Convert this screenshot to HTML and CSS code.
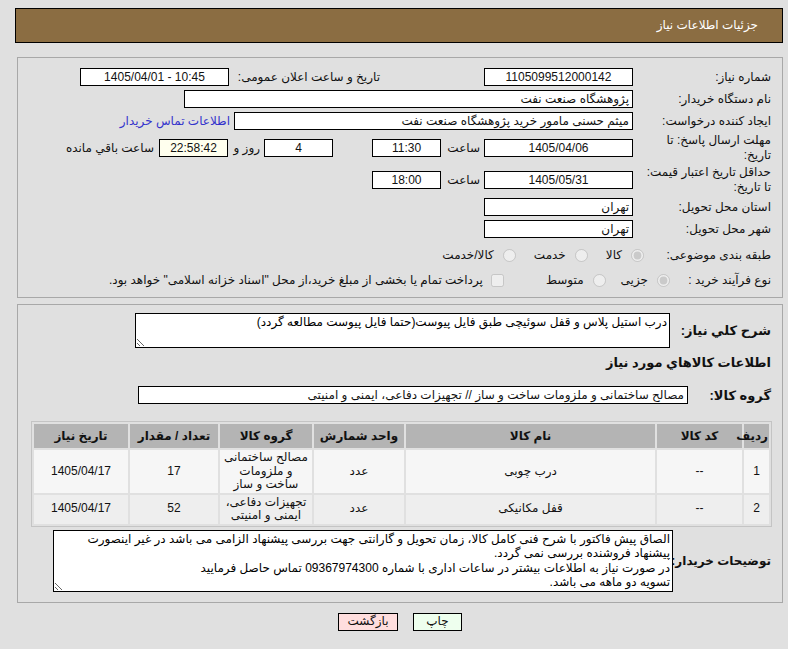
FILE: index.html
```html
<!DOCTYPE html>
<html lang="fa" dir="rtl">
<head>
  <meta charset="UTF-8" />
  <title>جزئیات اطلاعات نیاز</title>
  <link rel="stylesheet" href="styles.css">
</head>
<body>
  <div class="title-bar">جزئیات اطلاعات نیاز</div>

  <div class="panel info">
    <div class="row">
      <span class="lbl">شماره نیاز:</span>
      <span class="cell-first"><span class="box num w149" dir="ltr">1105099512000142</span></span>
      <span class="lbl-inline">تاریخ و ساعت اعلان عمومی:</span>
      <span class="box num w149" dir="ltr">1405/04/01 - 10:45</span>
    </div>
    <div class="row">
      <span class="lbl">نام دستگاه خریدار:</span>
      <span class="box w449">پژوهشگاه صنعت نفت</span>
    </div>
    <div class="row">
      <span class="lbl">ایجاد کننده درخواست:</span>
      <span class="box w399">میثم حسنی مامور خرید پژوهشگاه صنعت نفت</span>
      <a class="contact" href="#">اطلاعات تماس خریدار</a>
    </div>
    <div class="row tall">
      <span class="lbl">مهلت ارسال پاسخ: تا<br>تاریخ:</span>
      <span class="box num w149" dir="ltr">1405/04/06</span>
      <span class="unit">ساعت</span>
      <span class="box num w69" dir="ltr">11:30</span>
      <span class="box num w69 days" dir="ltr">4</span>
      <span class="unit short">روز و</span>
      <span class="box num w69 remain" dir="ltr">22:58:42</span>
      <span class="remain-lbl">ساعت باقي مانده</span>
    </div>
    <div class="row tall">
      <span class="lbl">حداقل تاریخ اعتبار قیمت:<br>تا تاریخ:</span>
      <span class="box num w149" dir="ltr">1405/05/31</span>
      <span class="unit">ساعت</span>
      <span class="box num w69" dir="ltr">18:00</span>
    </div>
    <div class="row">
      <span class="lbl">استان محل تحویل:</span>
      <span class="box w149">تهران</span>
    </div>
    <div class="row">
      <span class="lbl">شهر محل تحویل:</span>
      <span class="box w149">تهران</span>
    </div>
    <div class="row choice cat">
      <span class="lbl">طبقه بندی موضوعی:</span>
      <label class="opt"><input type="radio" name="cat" checked disabled>كالا</label>
      <label class="opt"><input type="radio" name="cat" disabled>خدمت</label>
      <label class="opt"><input type="radio" name="cat" disabled>كالا/خدمت</label>
    </div>
    <div class="row choice proc">
      <span class="lbl">نوع فرآیند خرید :</span>
      <label class="opt"><input type="radio" name="proc" checked disabled>جزیی</label>
      <label class="opt"><input type="radio" name="proc" disabled>متوسط</label>
      <label class="opt treasury"><input type="checkbox" disabled>پرداخت تمام یا بخشی از مبلغ خرید،از محل "اسناد خزانه اسلامی" خواهد بود.</label>
    </div>
  </div>

  <div class="panel details">
    <div class="row desc">
      <span class="lbl-bold">شرح کلي نياز:</span>
      <textarea class="area desc-area" readonly>درب استیل پلاس و قفل سوئیچی طبق فایل پیوست(حتما فایل پیوست مطالعه گردد)</textarea>
    </div>
    <div class="section-title">اطلاعات کالاهاي مورد نياز</div>
    <div class="row group">
      <span class="lbl-bold">گروه کالا:</span>
      <span class="box w550">مصالح ساختمانی و ملزومات ساخت و ساز // تجهیزات دفاعی، ایمنی و امنیتی</span>
    </div>
    <table class="items">
      <thead>
        <tr>
          <th class="c-row">ردیف</th>
          <th class="c-code">کد کالا</th>
          <th class="c-name">نام کالا</th>
          <th class="c-unit">واحد شمارش</th>
          <th class="c-group">گروه کالا</th>
          <th class="c-qty">تعداد / مقدار</th>
          <th class="c-date">تاریخ نیاز</th>
        </tr>
      </thead>
      <tbody>
        <tr class="odd">
          <td>1</td>
          <td>--</td>
          <td>درب چوبی</td>
          <td>عدد</td>
          <td>مصالح ساختمانی و ملزومات ساخت و ساز</td>
          <td>17</td>
          <td>1405/04/17</td>
        </tr>
        <tr class="even">
          <td>2</td>
          <td>--</td>
          <td>قفل مکانیکی</td>
          <td>عدد</td>
          <td>تجهیزات دفاعی، ایمنی و امنیتی</td>
          <td>52</td>
          <td>1405/04/17</td>
        </tr>
      </tbody>
    </table>
    <div class="row notes">
      <span class="lbl-bold">توضیحات خریدار:</span>
      <textarea class="area notes-area" readonly>الصاق پیش فاکتور با شرح فنی کامل کالا، زمان تحویل و گارانتی جهت بررسی پیشنهاد الزامی می باشد در غیر اینصورت پیشنهاد فروشنده بررسی نمی گردد.
در صورت نیاز به اطلاعات بیشتر در ساعات اداری با شماره 09367974300 تماس حاصل فرمایید
تسویه دو ماهه می باشد.</textarea>
    </div>
  </div>

  <div class="actions">
    <button class="btn print">چاپ</button>
    <button class="btn back">بازگشت</button>
  </div>
</body>
</html>
```

FILE: styles.css
```css
* { margin: 0; padding: 0; box-sizing: border-box; }
body { font-family: "Liberation Sans", "DejaVu Sans", sans-serif; font-size: 12px; color: #111; background: #e0e0e0; }

.title-bar { margin: 8px 5px 0 15px; height: 35px; line-height: 33px; padding-right: 24px; background: #8b6d42; border: 1px solid #000; color: #fff; font-size: 12px; }

.panel { margin: 14px 5px 0 17px; border: 1px solid #a8a8a8; padding-right: 11px; }
.info { padding-top: 8px; padding-bottom: 6px; }
.details { margin-top: 6px; padding-top: 8px; padding-bottom: 10px; }

.row { display: flex; align-items: center; height: 22px; }
.row.tall { height: 32px; }
.lbl { width: 138px; flex: none; line-height: 15px; }
.lbl-inline { width: 151px; flex: none; }
.cell-first { width: 253px; flex: none; display: flex; }

.box { display: inline-block; height: 18px; line-height: 16px; border: 1px solid #000; background: #fff; padding: 0 3px; white-space: nowrap; overflow: hidden; flex: none; }
.num { text-align: center; }
.w149 { width: 149px; }
.w69 { width: 69px; }
.w399 { width: 399px; }
.w449 { width: 449px; }
.w550 { width: 550px; }
.remain { background: #ffffee; }
.days { margin-right: 39px; }

.unit { width: 43px; padding-right: 4px; flex: none; }
.unit.short { width: 36px; }
.remain-lbl { margin-right: 5px; }
.contact { color: #3333cc; text-decoration: none; margin-right: 4px; }

.choice { gap: 0; }
.cat { margin-top: 4px; }
.proc { margin-top: 3px; }
.cat .lbl { width: 127px; }
.proc .lbl { width: 101px; }
.opt { display: flex; align-items: center; gap: 9px; margin-left: 18px; }
.opt input { margin: 0; width: 13px; height: 13px; }
.proc .opt { margin-left: 15px; }
.proc .treasury { margin-right: 27px; gap: 8px; }

.lbl-bold { font-weight: bold; font-size: 13px; flex: none; white-space: nowrap; }
.desc { height: auto; align-items: center; }
.desc .lbl-bold { width: 101px; }
.area { display: block; border: 1px solid #000; background: #fff; font-family: inherit; font-size: 12px; line-height: 14.5px; color: #000; padding: 1px 2px; overflow: hidden; }
.desc-area { width: 535px; height: 35px; }
.section-title { font-weight: bold; font-size: 13px; height: 30px; line-height: 30px; }
.group { margin-top: 8px; height: 18px; }
.group .lbl-bold { width: 83px; }

.items { margin: 17px -1px 0 10px; border: 1px solid #c4c4c4; border-spacing: 2px; width: 741px; table-layout: fixed; font-size: 12px; }
.items th { background: #b4b4b4; height: 24px; font-weight: bold; padding: 0 1px; white-space: nowrap; overflow: visible; }
.items td { text-align: center; padding: 1px 3px; line-height: 13.5px; }
.items .odd td { background: #f6f6f6; height: 42px; }
.items .even td { background: #eeeeee; height: 27px; }
.c-row { width: 25px; }
.c-code { width: 85px; }
.c-name { width: 249px; }
.c-unit { width: 90px; }
.c-group { width: 92px; }
.c-qty { width: 88px; }
.c-date { width: 94px; }

.notes { height: auto; margin-top: 3px; }
.notes .lbl-bold { width: 98px; font-size: 12px; }
.notes-area { width: 620px; height: 62px; }

.actions { display: flex; justify-content: center; gap: 15px; margin: 10px 0 0 12px; }
.btn { height: 18px; border: 1px solid #000; font-family: inherit; font-size: 12px; color: #111; line-height: 15px; }
.print { width: 49px; background: #eeffee; }
.back { width: 60px; background: #ffdede; }
```
